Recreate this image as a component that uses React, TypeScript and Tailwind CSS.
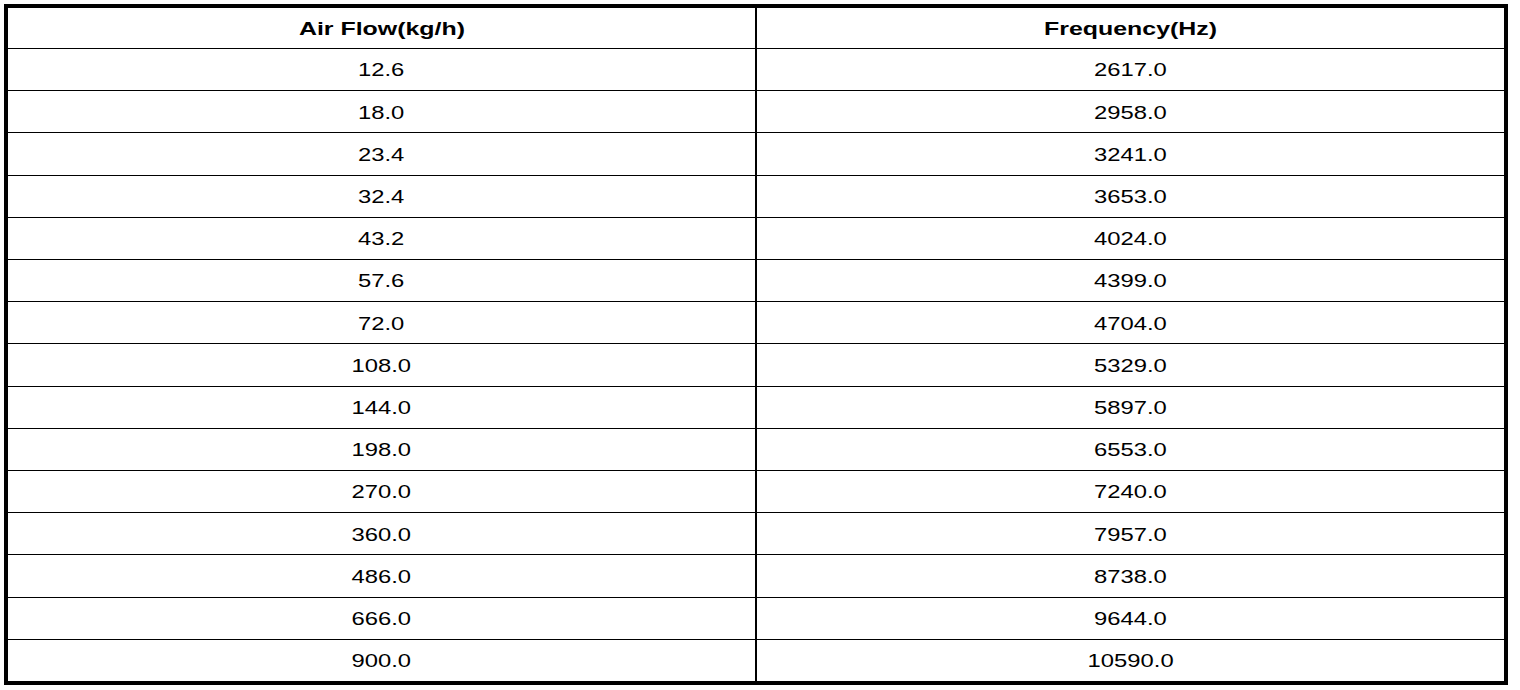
import React from "react";

const rows: [string, string][] = [
  ["12.6", "2617.0"],
  ["18.0", "2958.0"],
  ["23.4", "3241.0"],
  ["32.4", "3653.0"],
  ["43.2", "4024.0"],
  ["57.6", "4399.0"],
  ["72.0", "4704.0"],
  ["108.0", "5329.0"],
  ["144.0", "5897.0"],
  ["198.0", "6553.0"],
  ["270.0", "7240.0"],
  ["360.0", "7957.0"],
  ["486.0", "8738.0"],
  ["666.0", "9644.0"],
  ["900.0", "10590.0"],
];

function Cell({ text, bold, right }: { text: string; bold?: boolean; right?: boolean }) {
  return (
    <div
      className={
        "flex flex-1 items-center justify-center pt-[2px] " +
        (right ? "border-l-2 border-black" : "")
      }
    >
      <span
        className={
          "inline-block text-[18.6px] leading-none text-black " +
          (bold ? "font-bold scale-x-[1.34]" : "font-normal scale-x-[1.28]")
        }
      >
        {text}
      </span>
    </div>
  );
}

export default function App() {
  return (
    <div
      className="w-[1520px] h-[690px] bg-white pt-[4px] pl-[4px]"
      style={{ fontFamily: '"Liberation Sans", Arial, Helvetica, sans-serif' }}
    >
      <div className="w-[1504px] h-[681px] border-4 border-black flex flex-col">
        <div className="flex h-[40px] shrink-0">
          <Cell text="Air Flow(kg/h)" bold />
          <Cell text="Frequency(Hz)" bold right />
        </div>
        {rows.map(([a, b], i) => (
          <div key={i} className="flex flex-1 border-t border-black">
            <Cell text={a} />
            <Cell text={b} right />
          </div>
        ))}
      </div>
    </div>
  );
}
